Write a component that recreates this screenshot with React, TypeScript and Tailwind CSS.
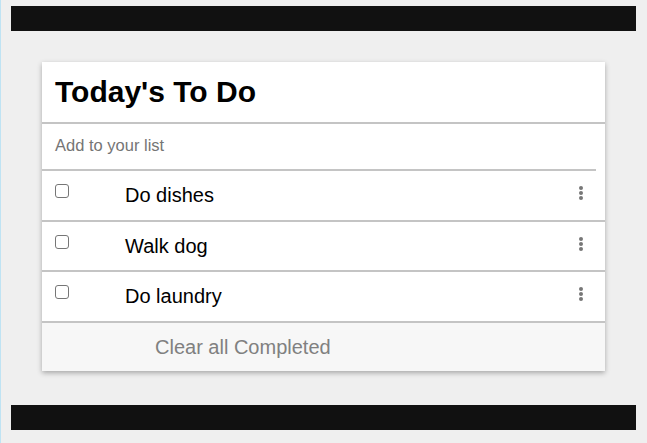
import React from "react";

const items = [
  { t: "Do dishes", h: "h-[51px]" },
  { t: "Walk dog", h: "h-[50px]" },
  { t: "Do laundry", h: "h-[51px]" },
];

function Kebab() {
  return (
    <div className="flex flex-col items-center gap-[1px]">
      <span className="block w-[4px] h-[4px] rounded-full bg-[#777]" />
      <span className="block w-[4px] h-[4px] rounded-full bg-[#777]" />
      <span className="block w-[4px] h-[4px] rounded-full bg-[#777]" />
    </div>
  );
}

export default function App() {
  return (
    <div
      className="w-[647px] h-[443px] bg-[#efefef] border-l border-[#bfe3f3] pt-[6px] pl-[10px] pr-[11px] flex flex-col"
      style={{ fontFamily: '"Liberation Sans", Arial, sans-serif' }}
    >
      <div className="h-[25px] bg-[#111111] shrink-0" />
      <div className="px-[31px] mt-[31px]">
        <div className="bg-white shadow-[0_2px_5px_rgba(0,0,0,0.3)]">
          <div className="h-[62px] flex items-center pl-[13px] border-b-2 border-[#c4c4c4]">
            <h1 className="text-[30px] font-bold text-black leading-none">Today's To Do</h1>
          </div>
          <div className="h-[47px] mr-[9px] border-b-2 border-[#c4c4c4] flex items-center pl-[13px]">
            <span className="text-[16.5px] text-[#757575] leading-none pb-[2px]">Add to your list</span>
          </div>
          {items.map((it) => (
            <div key={it.t} className={`${it.h} border-b-2 border-[#c4c4c4] flex pl-[13px] pr-[22px]`}>
              <div className="pt-[13px] w-[70px] shrink-0">
                <div className="w-[14px] h-[14px] rounded-[3px] border border-[#767676] bg-white" />
              </div>
              <div className="flex-1 pt-[12px] text-[20px] leading-[24px] text-black">{it.t}</div>
              <div className="pt-[15px]">
                <Kebab />
              </div>
            </div>
          ))}
          <div className="h-[48px] bg-[#f7f7f7] flex items-center pl-[113px]">
            <span className="text-[20px] text-[#808080] leading-none">Clear all Completed</span>
          </div>
        </div>
      </div>
      <div className="h-[25px] bg-[#111111] mt-[34px] shrink-0" />
    </div>
  );
}
